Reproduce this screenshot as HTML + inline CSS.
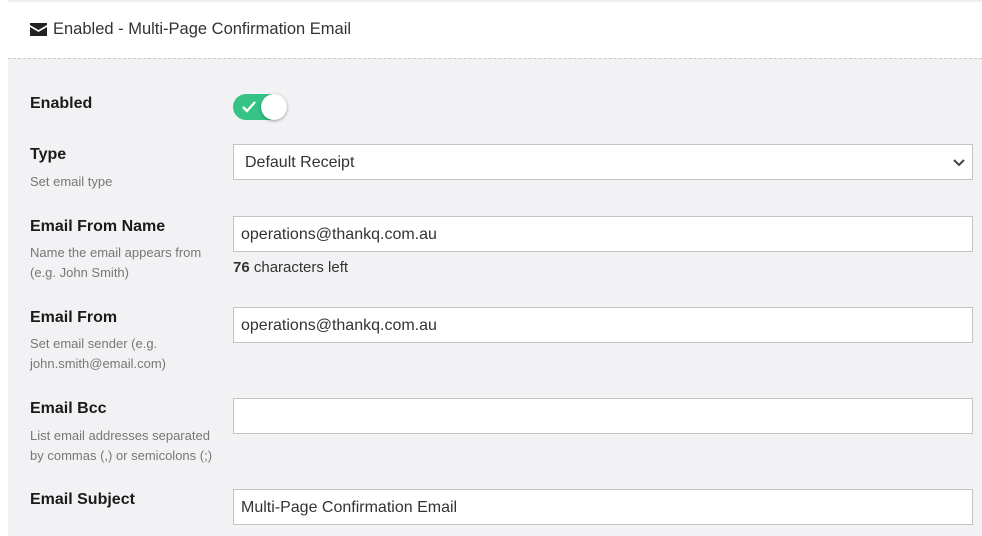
<!DOCTYPE html>
<html><head><style>
body{margin:0;width:982px;height:535px;background:#fff;font-family:"Liberation Sans",sans-serif;position:relative;overflow:hidden}
.top{position:absolute;left:8px;right:0;top:0;height:2px;background:#eeeef0}
.hdr{position:absolute;left:30px;top:20px;font-size:16.5px;color:#333;display:flex;align-items:center}
.panel{position:absolute;left:8px;top:58px;width:974px;height:477px;background:#f2f2f4;border-top:1px dashed #ccc}
.lbl{position:absolute;left:30px;font-size:16px;font-weight:bold;color:#1b1b1b}
.desc{position:absolute;left:30px;font-size:13px;color:#777;line-height:20px;width:185px}
.in{position:absolute;left:233px;width:740px;height:36px;background:#fff;border:1px solid #c4c4c4;font-size:16px;color:#333;line-height:36px;padding-left:7px;box-sizing:border-box}
.toggle{position:absolute;left:233px;top:94px;width:54px;height:26px;border-radius:13px;background:#35c486}
.knob{position:absolute;right:0;top:0;width:26px;height:26px;border-radius:50%;background:#fff;box-shadow:0 1px 3px rgba(0,0,0,.35)}
</style></head><body>
<div class="top"></div>
<div class="hdr"><svg width="17" height="13" viewBox="0 0 17 13" style="margin-right:6px"><path d="M0 0h17v2L8.5 7 0 2z" fill="#222"/><path d="M0 4l8.5 5L17 4v9H0z" fill="#222"/></svg>Enabled - Multi-Page Confirmation Email</div>
<div class="panel"></div>
<div class="lbl" style="top:95px">Enabled</div>
<div class="toggle"><svg width="16" height="14" style="position:absolute;left:8px;top:6px" viewBox="0 0 16 14"><path d="M2 7l4 4 8-9" stroke="#fff" stroke-width="2.4" fill="none"/></svg><div class="knob"></div></div>
<div class="lbl" style="top:146px">Type</div>
<div class="desc" style="top:172px">Set email type</div>
<div class="in" style="top:144px;padding-left:11px">Default Receipt<svg width="12" height="8" viewBox="0 0 12 8" style="position:absolute;right:7px;top:14px"><path d="M1 1l5 5 5-5" stroke="#444" stroke-width="2" fill="none"/></svg></div>
<div class="lbl" style="top:218px">Email From Name</div>
<div class="desc" style="top:243px">Name the email appears from (e.g. John Smith)</div>
<div class="in" style="top:216px">operations@thankq.com.au</div>
<div style="position:absolute;left:233px;top:259px;font-size:15px;color:#333"><b>76</b> characters left</div>
<div class="lbl" style="top:309px">Email From</div>
<div class="desc" style="top:334px">Set email sender (e.g. john.smith@email.com)</div>
<div class="in" style="top:307px">operations@thankq.com.au</div>
<div class="lbl" style="top:400px">Email Bcc</div>
<div class="desc" style="top:426px">List email addresses separated by commas (,) or semicolons (;)</div>
<div class="in" style="top:398px"></div>
<div class="lbl" style="top:491px">Email Subject</div>
<div class="in" style="top:489px">Multi-Page Confirmation Email</div>
</body></html>
